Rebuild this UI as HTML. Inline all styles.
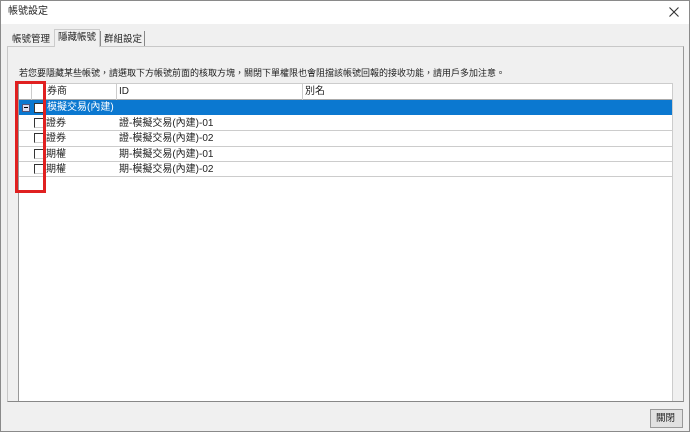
<!DOCTYPE html>
<html><head><meta charset="utf-8"><style>
*{margin:0;padding:0;box-sizing:border-box}
body{width:690px;height:432px;overflow:hidden;background:#f0f0f0;font-family:"Liberation Sans","Noto Sans CJK TC",sans-serif;font-size:10px;line-height:14px;color:#222;position:relative}
.a{position:absolute;white-space:nowrap}
</style></head><body>
<div class="a" style="left:0;top:0;width:690px;height:432px;border:1px solid #8a8a8a"></div>
<div class="a" style="left:1px;top:1px;width:688px;height:23px;background:#fff"></div>
<div class="a" style="left:8px;top:5px;font-size:10px">帳號設定</div>
<svg class="a" style="left:669px;top:7px" width="10" height="10"><path d="M0.5 0.5L9.5 9.5M9.5 0.5L0.5 9.5" stroke="#333" stroke-width="1.1"/></svg>
<div class="a" style="left:7px;top:46px;width:677px;height:356px;border:1px solid #c8c8c8;border-right-color:#999;border-bottom-color:#888"></div>
<div class="a" style="left:12px;top:33px;font-size:9.5px">帳號管理</div>
<div class="a" style="left:54px;top:29px;width:46px;height:18px;background:#f0f0f0;border:1px solid #ccc;border-bottom:none"></div>
<div class="a" style="left:58px;top:31px;font-size:9.5px">隱藏帳號</div>
<div class="a" style="left:100px;top:31px;width:1px;height:15px;background:#888"></div>
<div class="a" style="left:144px;top:31px;width:1px;height:15px;background:#888"></div>
<div class="a" style="left:104px;top:33px;font-size:9.5px">群組設定</div>
<div class="a" style="left:19px;top:66px;font-size:9px">若您要隱藏某些帳號，請選取下方帳號前面的核取方塊，關閉下單權限也會阻擋該帳號回報的接收功能，請用戶多加注意。</div>
<div class="a" style="left:18px;top:83px;width:655px;height:318px;background:#fff;border-left:1px solid #999;border-top:1px solid #ccc;border-right:1px solid #ccc"></div>
<div class="a" style="left:19px;top:84px;width:653px;height:16px;background:#fff;border-bottom:1px solid #aaa"></div>
<div class="a" style="left:31px;top:84px;width:1px;height:16px;background:#ccc"></div>
<div class="a" style="left:45px;top:84px;width:1px;height:16px;background:#ccc"></div>
<div class="a" style="left:116px;top:84px;width:1px;height:16px;background:#ccc"></div>
<div class="a" style="left:302px;top:84px;width:1px;height:16px;background:#ccc"></div>
<div class="a" style="left:47px;top:85px">券商</div>
<div class="a" style="left:119px;top:85px">ID</div>
<div class="a" style="left:305px;top:85px">別名</div>
<div class="a" style="left:19px;top:100px;width:653px;height:15px;background:#0b78d0"></div>
<div class="a" style="left:22px;top:104px;width:8px;height:8px;background:#dde;border:1px solid #557"></div>
<div class="a" style="left:24px;top:107px;width:4px;height:1px;background:#000"></div>
<div class="a" style="left:34px;top:103px;width:10px;height:10px;background:#fff;border:1px solid #333"></div>
<div class="a" style="left:47px;top:101px;color:#fff">模擬交易(內建)</div>
<div class="a" style="left:19px;top:130px;width:653px;height:1px;background:#ccc"></div>
<div class="a" style="left:19px;top:146px;width:653px;height:1px;background:#ccc"></div>
<div class="a" style="left:19px;top:161px;width:653px;height:1px;background:#ccc"></div>
<div class="a" style="left:19px;top:176px;width:653px;height:1px;background:#ccc"></div>
<div class="a" style="left:34px;top:118px;width:10px;height:10px;border:1px solid #333;border-right-color:#ccc;border-bottom-color:#ccc"></div>
<div class="a" style="left:34px;top:133px;width:10px;height:10px;border:1px solid #333;border-right-color:#ccc;border-bottom-color:#ccc"></div>
<div class="a" style="left:34px;top:149px;width:10px;height:10px;border:1px solid #333;border-right-color:#ccc;border-bottom-color:#ccc"></div>
<div class="a" style="left:34px;top:164px;width:10px;height:10px;border:1px solid #333;border-right-color:#ccc;border-bottom-color:#ccc"></div>
<div class="a" style="left:46px;top:117px">證券</div><div class="a" style="left:119px;top:117px">證-模擬交易(內建)-01</div>
<div class="a" style="left:46px;top:132px">證券</div><div class="a" style="left:119px;top:132px">證-模擬交易(內建)-02</div>
<div class="a" style="left:46px;top:148px">期權</div><div class="a" style="left:119px;top:148px">期-模擬交易(內建)-01</div>
<div class="a" style="left:46px;top:163px">期權</div><div class="a" style="left:119px;top:163px">期-模擬交易(內建)-02</div>
<div class="a" style="left:15px;top:81px;width:31px;height:112px;border:3px solid #e02020"></div>
<div class="a" style="left:650px;top:409px;width:33px;height:19px;background:#e1e1e1;border:1px solid #999"></div>
<div class="a" style="left:656px;top:412px;font-size:9.5px">關閉</div>
</body></html>
